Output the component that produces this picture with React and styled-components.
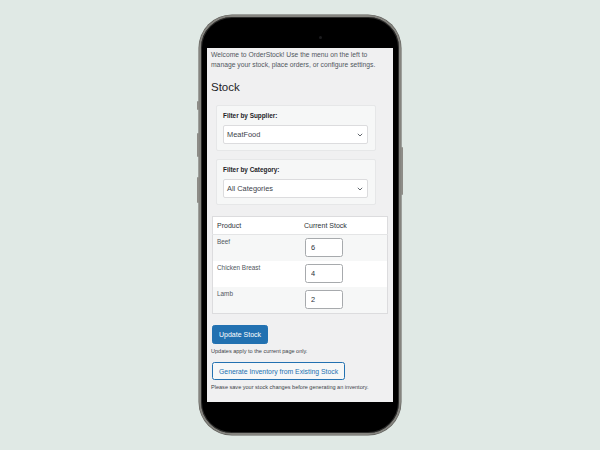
import React from 'react'
import styled, { createGlobalStyle } from 'styled-components'

const GlobalStyle = createGlobalStyle`
  html, body {
    margin: 0;
    padding: 0;
    background: #e0e9e5;
    font-family: "Liberation Sans", Arial, sans-serif;
  }
`

const Page = styled.div`
  display: flex;
  align-items: center;
  justify-content: center;
  width: 600px;
  height: 450px;
`

const Phone = styled.div`
  position: relative;
  box-sizing: border-box;
  width: 202px;
  height: 420px;
  padding: 31px 6px;
  background: #000;
  border: 2px solid #85847f;
  border-radius: 33px;
  box-shadow: inset 0 0 0 1px #2b2b2a, 0 0 0 0.5px #5a5955;
`

const SideButton = styled.span`
  position: absolute;
  ${p => (p.$right ? 'right: -4px;' : 'left: -4px;')}
  top: ${p => p.$top}px;
  width: 2px;
  height: ${p => p.$h}px;
  background: #8d8c87;
  border-radius: 1px;
`

const Camera = styled.span`
  position: absolute;
  top: 19px;
  left: 118px;
  width: 3px;
  height: 3px;
  border-radius: 50%;
  background: #1c1c1e;
`

const Screen = styled.div`
  box-sizing: border-box;
  width: 186px;
  height: 354px;
  padding: 2px 4px 0 4px;
  background: #f0f0f1;
  color: #3c434a;
  overflow: hidden;
`

const Intro = styled.p`
  margin: 0;
  font-size: 6.75px;
  line-height: 10px;
  color: #50575e;
`

const Title = styled.h1`
  margin: 9.5px 0 0;
  font-size: 11.5px;
  line-height: 14px;
  font-weight: 400;
  color: #1d2327;
`

const Card = styled.div`
  box-sizing: border-box;
  width: 160px;
  margin: ${p => p.$top}px 0 0 5px;
  padding: 6px 7px 6px 6px;
  background: #f6f7f7;
  border: 1px solid #e6e7e8;
  border-radius: 2px;
`

const Label = styled.div`
  font-size: 6.4px;
  line-height: 8px;
  font-weight: 700;
  color: #1d2327;
  margin-bottom: 5px;
`

const Select = styled.div`
  box-sizing: border-box;
  display: flex;
  align-items: center;
  justify-content: space-between;
  height: 19px;
  padding: 0 4px 0 3px;
  background: #fff;
  border: 1px solid #dcdcde;
  border-radius: 2px;
  font-size: 7.4px;
  color: #3c434a;
`

const Table = styled.table`
  box-sizing: border-box;
  width: 176px;
  margin: 11px 0 0 1px;
  table-layout: fixed;
  border-collapse: collapse;
  border: 1px solid #dcdcde;
  background: #fff;
`

const Th = styled.th`
  height: 17px;
  padding: 0 4px;
  text-align: left;
  font-weight: 400;
  font-size: 7px;
  color: #2c3338;
  border-bottom: 1px solid #e4e5e6;
  width: ${p => p.$w || 'auto'};
`

const Row = styled.tr`
  background: ${p => (p.$alt ? '#f6f7f7' : '#fff')};
`

const Td = styled.td`
  vertical-align: top;
  padding: 3px 4px 4px;
  height: 19px;
  font-size: 6.4px;
  line-height: 8px;
  color: #50575e;
`

const StockInput = styled.input`
  box-sizing: border-box;
  display: block;
  width: 38px;
  height: 19px;
  margin-left: 1px;
  padding: 0 5px;
  border: 1px solid #a7aaad;
  border-radius: 2.5px;
  background: #fff;
  font-family: inherit;
  font-size: 7.4px;
  color: #2c3338;
`

const Button = styled.button`
  box-sizing: border-box;
  display: block;
  height: ${p => p.$h}px;
  margin: ${p => p.$top}px 0 0 1px;
  padding: 0 6px;
  border-radius: 2.5px;
  font-family: inherit;
  font-size: ${p => (p.$primary ? 7 : 6.85)}px;
  border: 1px solid #2271b1;
  background: ${p => (p.$primary ? '#2271b1' : '#f6f7f7')};
  color: ${p => (p.$primary ? '#fff' : '#2271b1')};
`

const Note = styled.p`
  margin: 3.5px 0 0;
  font-size: 5.55px;
  line-height: 7px;
  color: #3c434a;
`

const Chevron = () => (
  <svg width="6" height="4" viewBox="0 0 6 4" fill="none">
    <path d="M0.8 0.8 L3 3 L5.2 0.8" stroke="#50575e" strokeWidth="0.9" />
  </svg>
)

const rows = [
  { name: 'Beef', qty: 6 },
  { name: 'Chicken Breast', qty: 4 },
  { name: 'Lamb', qty: 2 },
]

export default function App() {
  return (
    <Page>
      <GlobalStyle />
      <Phone>
        <SideButton $top={84} $h={9} />
        <SideButton $top={116} $h={24} />
        <SideButton $top={160} $h={26} />
        <SideButton $right $top={130} $h={48} />
        <Camera />
        <Screen>
          <Intro>
            Welcome to OrderStock! Use the menu on the left to manage your stock, place orders, or
            configure settings.
          </Intro>
          <Title>Stock</Title>
          <Card $top={11.5}>
            <Label>Filter by Supplier:</Label>
            <Select>
              MeatFood
              <Chevron />
            </Select>
          </Card>
          <Card $top={8}>
            <Label>Filter by Category:</Label>
            <Select>
              All Categories
              <Chevron />
            </Select>
          </Card>
          <Table>
            <thead>
              <tr>
                <Th $w="79px">Product</Th>
                <Th>Current Stock</Th>
              </tr>
            </thead>
            <tbody>
              {rows.map((r, i) => (
                <Row key={r.name} $alt={i % 2 === 0}>
                  <Td>{r.name}</Td>
                  <Td>
                    <StockInput defaultValue={r.qty} />
                  </Td>
                </Row>
              ))}
            </tbody>
          </Table>
          <Button $primary $h={19} $top={11}>Update Stock</Button>
          <Note>Updates apply to the current page only.</Note>
          <Button $h={18} $top={7.5}>Generate Inventory from Existing Stock</Button>
          <Note>Please save your stock changes before generating an inventory.</Note>
        </Screen>
      </Phone>
    </Page>
  )
}
